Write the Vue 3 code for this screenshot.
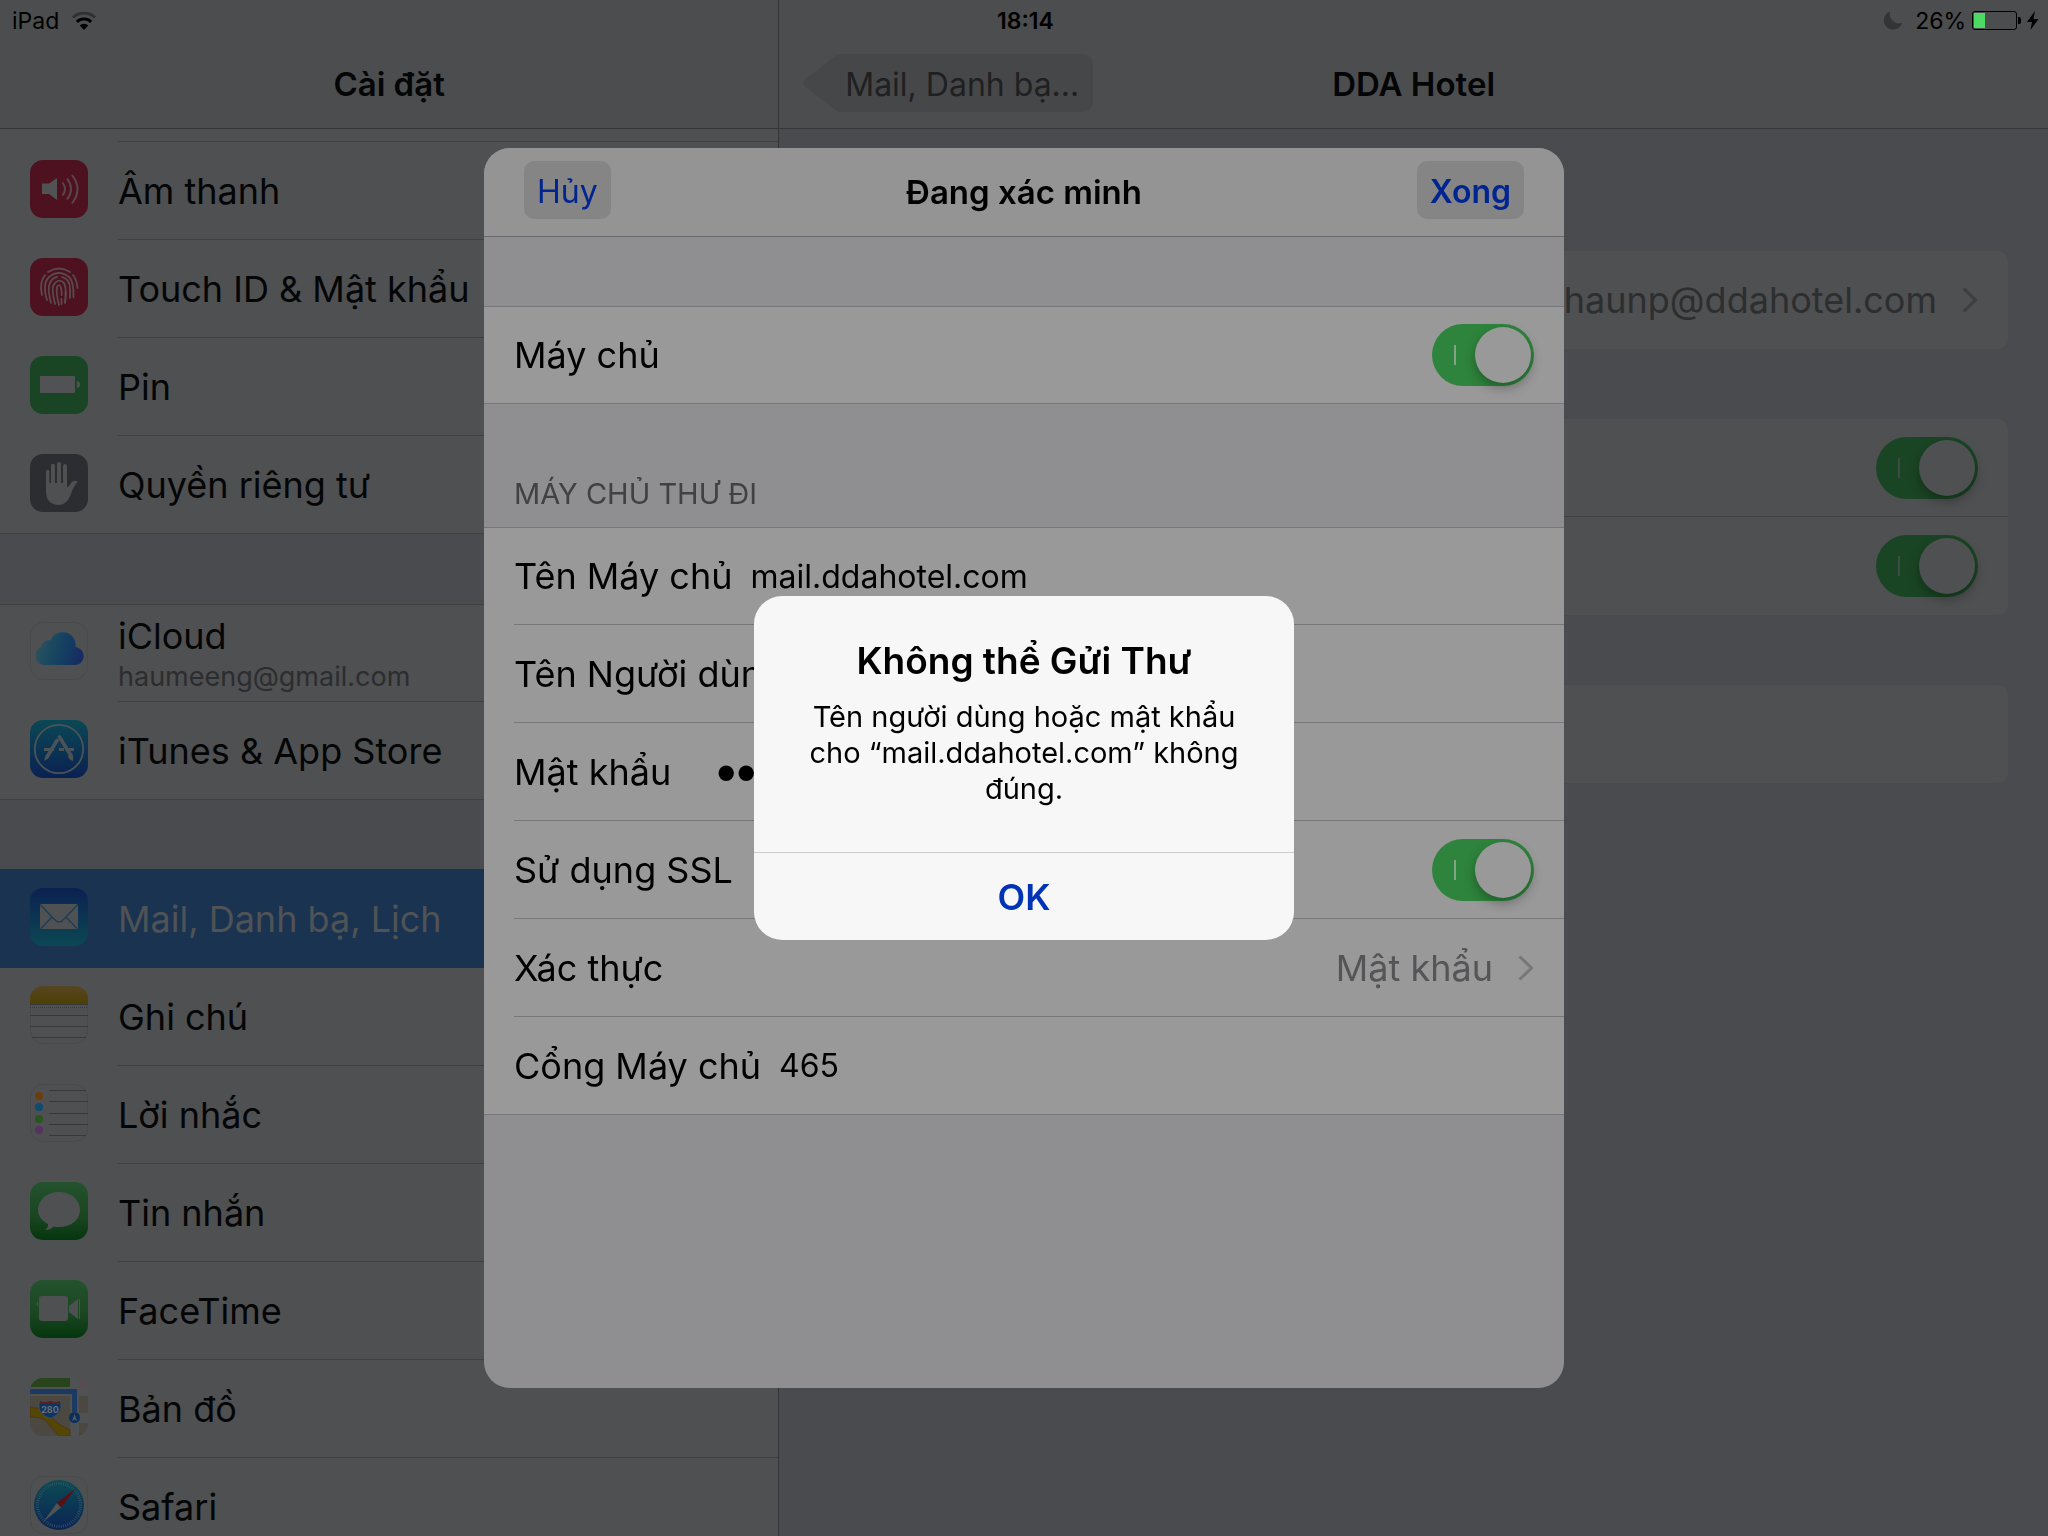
<script setup>
import { ref } from 'vue'

const groups = [
  {
    key: 'device',
    items: [
      { icon: 'sound', label: 'Âm thanh' },
      { icon: 'touch', label: 'Touch ID & Mật khẩu' },
      { icon: 'battery', label: 'Pin' },
      { icon: 'privacy', label: 'Quyền riêng tư' },
    ],
  },
  {
    key: 'accounts',
    items: [
      { icon: 'icloud', label: 'iCloud', detail: 'haumeeng@gmail.com' },
      { icon: 'store', label: 'iTunes & App Store' },
    ],
  },
  {
    key: 'apps',
    items: [
      { icon: 'mail', label: 'Mail, Danh bạ, Lịch', active: true },
      { icon: 'notes', label: 'Ghi chú' },
      { icon: 'reminders', label: 'Lời nhắc' },
      { icon: 'messages', label: 'Tin nhắn' },
      { icon: 'facetime', label: 'FaceTime' },
      { icon: 'maps', label: 'Bản đồ' },
      { icon: 'safari', label: 'Safari' },
    ],
  },
]

const reminderDots = [
  { y: 12, color: '#6b3d0c' },
  { y: 23, color: '#0f4a70' },
  { y: 35, color: '#27561f' },
  { y: 46, color: '#553262' },
]

const ticks = Array.from({ length: 60 }, (_, i) => i * 6)

const serverOn = ref(true)
const sslOn = ref(true)
const mailOn = ref(true)
const notesOn = ref(true)
const hostName = ref('mail.ddahotel.com')
const userName = ref('')
const password = ref('12')
const port = ref('465')
</script>

<template>
  <div class="screen">
    <header class="status">
      <div class="status-left">
        <span>iPad</span>
        <svg width="24" height="18" viewBox="0 0 24 18" aria-hidden="true">
          <path d="M1 5.500 A16 16 0 0 1 23 5.500" fill="none" stroke="#2f3031" stroke-width="3" />
          <path d="M4.800 9.800 A10.500 10.500 0 0 1 19.200 9.800" fill="none" stroke="#000" stroke-width="3" />
          <path d="M12 18 L7.700 13.400 A6.500 6.500 0 0 1 16.300 13.400 Z" fill="#000" />
        </svg>
      </div>
      <time class="clock">18:14</time>
      <div class="status-right">
        <svg class="moon" width="20" height="19" viewBox="0 0 20 19" aria-hidden="true">
          <path d="M7 0.500 A9.300 9.300 0 1 0 19 12 A9.500 9.500 0 0 1 7 0.500 Z" fill="#333435" />
        </svg>
        <span>26%</span>
        <svg class="cell" width="50" height="20" viewBox="0 0 50 20" aria-hidden="true">
          <rect x="0.500" y="0.500" width="44" height="18" rx="2.500" fill="none" stroke="#000" />
          <rect x="2" y="2" width="11" height="15" fill="#4cd964" />
          <path d="M46 6 h1 a2 2 0 0 1 2 2 v3 a2 2 0 0 1 -2 2 h-1 Z" fill="#000" />
        </svg>
        <svg width="12" height="20" viewBox="0 0 12 20" aria-hidden="true">
          <path d="M8 0 L0 11 H5 L3.500 19 L11.500 8 H6.500 Z" fill="#000" />
        </svg>
      </div>
    </header>

    <div class="split">
      <aside class="sidebar">
        <div class="navbar"><h1>Cài đặt</h1></div>
        <nav class="menu">
          <div class="peek"></div>
          <ul v-for="group in groups" :key="group.key" class="group">
            <li v-for="item in group.items" :key="item.icon" class="item" :class="{ active: item.active }">
              <a href="#" class="link">
                <svg class="icon" width="58" height="58" viewBox="0 0 58 58" aria-hidden="true">
                  <template v-if="item.icon === 'sound'">
                    <rect width="58" height="58" rx="13" fill="#4e111f" />
                    <path d="M12 23.500 H19 L27 18 V40 L19 34 H12 Z" fill="#515253" />
                    <path d="M32.500 22.500 q5 6.500 0 13 M37 18.500 q8 10.500 0 21 M42 15 q11 14 0 28.500" fill="none" stroke="#5b4549" stroke-width="2" />
                  </template>
                  <template v-else-if="item.icon === 'touch'">
                    <rect width="58" height="58" rx="13" fill="#4e111f" />
                    <g fill="none" stroke="#5a4a4e" stroke-width="1.800" stroke-linecap="round">
                      <path d="M18 14 Q29 7 40 14" />
                      <path d="M15 17 Q9 25 12 37" />
                      <path d="M43 17 Q47 22 47.500 30" />
                      <path d="M17 42 Q12 26 19 19 Q29 11 39 19 Q44 24 43.500 39" />
                      <path d="M21 45 Q17 30 20 25 Q22 20 27 19 M32 19 Q40 21 40 31 V40" />
                      <path d="M25 46 Q22 34 23 28 Q28 19 34 25 Q37 31 35 44" />
                      <path d="M29 47 Q26 36 27 29 Q30 25 31 30 Q32 34 31.500 37 M31.500 41 V46" />
                      <path d="M35 45 Q36 38 35.500 34" />
                    </g>
                  </template>
                  <template v-else-if="item.icon === 'battery'">
                    <rect width="58" height="58" rx="13" fill="#1a4524" />
                    <rect x="10" y="20" width="35" height="17" rx="1" fill="#505253" />
                    <path d="M47 25 q3 0.500 3 3.500 t-3 3.500 Z" fill="#505253" />
                  </template>
                  <template v-else-if="item.icon === 'privacy'">
                    <rect width="58" height="58" rx="13" fill="#2c2d30" />
                    <g fill="none" stroke="#4f5051" stroke-linecap="round">
                      <path d="M17.700 17.500 V34" stroke-width="3.400" />
                      <path d="M23 11.700 V34 M29 10 V34 M35 12 V34" stroke-width="4" />
                    </g>
                    <path d="M16 29 H37 V33 Q39 33 41 29 Q44 25.500 47.500 27.500 Q44 32 42 37 Q38 51 28 51 Q16 50 16 37 Z" fill="#4f5051" />
                  </template>
                  <template v-else-if="item.icon === 'icloud'">
                    <defs>
                      <linearGradient id="cloud" x1="0" x2="1" y1="0.200" y2="0.400">
                        <stop offset="0" stop-color="#33535c" />
                        <stop offset="0.350" stop-color="#1a4a60" />
                        <stop offset="0.700" stop-color="#143c62" />
                        <stop offset="1" stop-color="#182c62" />
                      </linearGradient>
                    </defs>
                    <rect x="0.500" y="0.500" width="57" height="57" rx="13" fill="#4f5051" stroke="#484a4b" />
                    <path d="M14 43 A9.500 9.500 0 0 1 11 25 A8 8 0 0 1 20.500 18.500 A13 13 0 0 1 45.500 25 A9 9 0 0 1 44 43 Z" fill="url(#cloud)" />
                  </template>
                  <template v-else-if="item.icon === 'store'">
                    <defs>
                      <linearGradient id="store" x1="0" x2="0" y1="0" y2="1">
                        <stop offset="0" stop-color="#0a4855" />
                        <stop offset="1" stop-color="#0a2152" />
                      </linearGradient>
                    </defs>
                    <rect width="58" height="58" rx="13" fill="url(#store)" />
                    <circle cx="29" cy="29" r="24.200" fill="none" stroke="#4b5357" stroke-width="1.800" />
                    <g stroke="#4b5357" fill="none">
                      <path d="M14 29.500 H24 M29 29.500 H34 M39 29.500 H44" stroke-width="3" />
                      <path d="M29.500 17 L40.500 35" stroke-width="3.600" stroke-linecap="round" />
                      <path d="M27 20.500 L17 37" stroke-width="3.600" stroke-linecap="round" />
                    </g>
                    <path d="M38 36 L42 33 Q44 37 43 41 Q39 40 38 36 Z M15 36 L18.500 38 L14.500 41 Z" fill="#4b5357" />
                  </template>
                  <template v-else-if="item.icon === 'mail'">
                    <defs>
                      <linearGradient id="mail" x1="0" x2="0" y1="0" y2="1">
                        <stop offset="0" stop-color="#0b2150" />
                        <stop offset="1" stop-color="#0b4854" />
                      </linearGradient>
                    </defs>
                    <rect width="58" height="58" rx="13" fill="url(#mail)" />
                    <rect x="10" y="16" width="38" height="25" rx="1.500" fill="#4f5153" />
                    <path d="M10.500 17 L24 31 Q29 37 34 31 L47.500 17 M11 40.500 L22 29 M47 40.500 L36 29" fill="none" stroke="#1a3d58" stroke-width="1.300" />
                  </template>
                  <template v-else-if="item.icon === 'notes'">
                    <defs>
                      <clipPath id="notes-clip"><rect width="58" height="58" rx="13" /></clipPath>
                      <linearGradient id="notes" x1="0" x2="0" y1="0" y2="1">
                        <stop offset="0" stop-color="#564523" />
                        <stop offset="1" stop-color="#4e3f04" />
                      </linearGradient>
                    </defs>
                    <rect x="0.500" y="0.500" width="57" height="57" rx="13" fill="#4f5051" stroke="#484a4b" />
                    <g clip-path="url(#notes-clip)">
                      <rect width="58" height="18" fill="url(#notes)" />
                      <path d="M0 18.500 H58" stroke="#38393a" />
                      <path d="M0 21.500 H58" stroke="#3a3b3c" stroke-dasharray="1 1" />
                      <path d="M0 29.500 H58 M0 40.500 H58 M0 51.500 H58" stroke="#37383a" />
                    </g>
                  </template>
                  <template v-else-if="item.icon === 'reminders'">
                    <rect x="0.500" y="0.500" width="57" height="57" rx="13" fill="#4f5051" stroke="#484a4b" />
                    <circle v-for="dot in reminderDots" :key="dot.y" cx="9" :cy="dot.y" r="4" :fill="dot.color" />
                    <path d="M19 6.500 H56 M19 17.500 H58 M19 29.500 H58 M19 40.500 H58 M19 51.500 H56" stroke="#37383a" />
                  </template>
                  <template v-else-if="item.icon === 'messages'">
                    <defs>
                      <linearGradient id="green" x1="0" x2="0" y1="0" y2="1">
                        <stop offset="0" stop-color="#24532e" />
                        <stop offset="0.600" stop-color="#1a4521" />
                        <stop offset="1" stop-color="#04360d" />
                      </linearGradient>
                    </defs>
                    <rect width="58" height="58" rx="13" fill="url(#green)" />
                    <path d="M29 10 C41 10 50 18 50 28 C50 38 41 45 29 45 Q26 45 24 44.500 Q20 48 15 48 Q18.500 45 18 42 C12 39 8 34 8 28 C8 18 17 10 29 10 Z" fill="#4f5051" />
                  </template>
                  <template v-else-if="item.icon === 'facetime'">
                    <rect width="58" height="58" rx="13" fill="url(#green)" />
                    <rect x="9" y="16" width="29" height="25" rx="3" fill="#4f5051" />
                    <path d="M39 26 L48 19 V39 L39 32 Z M49 19 h1 v20 h-1 Z M6 24 l2 -2 v5 Z" fill="#4f5051" />
                  </template>
                  <template v-else-if="item.icon === 'maps'">
                    <defs>
                      <clipPath id="maps-clip"><rect width="58" height="58" rx="13" /></clipPath>
                    </defs>
                    <g clip-path="url(#maps-clip)">
                      <rect width="58" height="58" fill="#505152" />
                      <rect width="40" height="9" fill="#28441a" />
                      <path d="M49 0 V9 H58 Z" fill="#5b4a50" />
                      <rect y="18" width="40" height="40" fill="#4a4841" />
                      <rect x="49" y="18" width="9" height="17" fill="#4a4841" />
                      <rect x="49" y="45" width="9" height="13" fill="#4a4841" />
                      <path d="M0 29 Q16 30 24 42 Q32 49 40 52 V58 H29 Q20 48 15 42 Q10 39 0 39 Z" fill="#544703" stroke="#54351b" />
                      <path d="M49 55 H55 L51 58 H49 Z" fill="#544703" />
                      <path d="M0 13.500 H44.500 V34" fill="none" stroke="#1a3a63" stroke-width="5" />
                      <path d="M9 24 H31 V30 Q30 37 20 40.500 Q10 37 9 30 Z" fill="#0b3563" stroke="#4f5152" stroke-width="0.800" />
                      <path d="M10 23 Q15 25 20 23 Q25 25 30 23 V26 H10 Z" fill="#5b1d22" />
                      <text x="20" y="35" text-anchor="middle" font-size="9" font-weight="700" fill="#6a6d70">280</text>
                      <circle cx="44.500" cy="39.500" r="5.500" fill="#0b2f5b" />
                      <path d="M44.500 36 L47 43 L44.500 41.500 L42 43 Z" fill="#55585a" />
                    </g>
                  </template>
                  <template v-else-if="item.icon === 'safari'">
                    <defs>
                      <linearGradient id="safari" x1="0" x2="0" y1="0" y2="1">
                        <stop offset="0" stop-color="#0b4b55" />
                        <stop offset="1" stop-color="#0b2454" />
                      </linearGradient>
                    </defs>
                    <rect x="0.500" y="0.500" width="57" height="57" rx="13" fill="#4f5051" stroke="#484a4b" />
                    <circle cx="29" cy="29" r="25" fill="url(#safari)" />
                    <path v-for="angle in ticks" :key="angle" d="M29 6 V9" stroke="#3f5763" stroke-width="0.700" :transform="`rotate(${angle} 29 29)`" />
                    <path d="M46 12 L27 27 L31 31.500 Z" fill="#5b0f14" />
                    <path d="M13 46 L27 27 L31 31.500 Z" fill="#505354" />
                  </template>
                </svg>
                <span class="texts">
                  <span class="label">{{ item.label }}</span>
                  <span v-if="item.detail" class="detail">{{ item.detail }}</span>
                </span>
              </a>
            </li>
          </ul>
        </nav>
      </aside>

      <main class="pane">
        <div class="navbar pane-bar">
          <button type="button" class="back">
            <svg class="arrow" width="38" height="58" viewBox="0 0 38 58" aria-hidden="true">
              <path d="M38 0 Q34 0 31 3 L2 25.500 Q-1 29 2 32.500 L31 55 Q34 58 38 58 Z" />
            </svg>
            <span class="back-text">Mail, Danh bạ...</span>
          </button>
          <h2>DDA Hotel</h2>
        </div>
        <div class="cards">
          <section class="card">
            <a href="#" class="card-row">
              <span class="account">haunp@ddahotel.com</span>
              <svg class="chevron" width="16" height="26" viewBox="0 0 16 26" aria-hidden="true">
                <path d="M1.500 1.500 L13.500 13 L1.500 24.500" />
              </svg>
            </a>
          </section>
          <section class="card">
            <div class="card-row"><input v-model="mailOn" type="checkbox" role="switch" class="toggle dim" aria-label="Mail" /></div>
            <div class="card-row"><input v-model="notesOn" type="checkbox" role="switch" class="toggle dim" aria-label="Ghi chú" /></div>
          </section>
          <section class="card"><div class="card-row"></div></section>
        </div>
      </main>
    </div>

    <div class="overlay">
      <form class="sheet" @submit.prevent>
        <header class="sheet-bar">
          <button type="button" class="pill">Hủy</button>
          <h2>Đang xác minh</h2>
          <button type="submit" class="pill strong">Xong</button>
        </header>
        <div class="fields spaced">
          <div class="field">
            <label for="server">Máy chủ</label>
            <input id="server" v-model="serverOn" type="checkbox" role="switch" class="toggle" />
          </div>
        </div>
        <h3 class="caption">MÁY CHỦ THƯ ĐI</h3>
        <div class="fields">
          <div class="field">
            <label for="host">Tên Máy chủ</label>
            <input id="host" v-model="hostName" type="text" class="value" />
          </div>
          <div class="field">
            <label for="user">Tên Người dùng</label>
            <input id="user" v-model="userName" type="text" class="value" />
          </div>
          <div class="field">
            <label for="password">Mật khẩu</label>
            <input id="password" v-model="password" type="password" class="value secret" />
          </div>
          <div class="field">
            <label for="ssl">Sử dụng SSL</label>
            <input id="ssl" v-model="sslOn" type="checkbox" role="switch" class="toggle" />
          </div>
          <a href="#" class="field">
            <span>Xác thực</span>
            <span class="choice">Mật khẩu</span>
            <svg class="chevron light" width="16" height="26" viewBox="0 0 16 26" aria-hidden="true">
              <path d="M1.500 1.500 L13.500 13 L1.500 24.500" />
            </svg>
          </a>
          <div class="field">
            <label for="port">Cổng Máy chủ</label>
            <input id="port" v-model="port" type="text" class="value" />
          </div>
        </div>
      </form>
    </div>

    <div class="overlay">
      <div class="alert" role="alertdialog" aria-labelledby="alert-title" aria-describedby="alert-text">
        <div class="alert-body">
          <h2 id="alert-title">Không thể Gửi Thư</h2>
          <p id="alert-text">Tên người dùng hoặc mật khẩu cho “mail.ddahotel.com” không đúng.</p>
        </div>
        <button type="button" class="ok">OK</button>
      </div>
    </div>
  </div>
</template>

<style>
body {
  background: #4a4b4e;
}
</style>

<style scoped>
* {
  box-sizing: border-box;
}

.screen {
  position: relative;
  display: flex;
  flex-direction: column;
  height: 100vh;
  overflow: hidden;
  background: #4a4b4e;
  color: #040506;
  font-family: Inter, "Liberation Sans", sans-serif;
  font-size: 36px;
}

h1,
h2,
h3,
p,
ul {
  margin: 0;
  padding: 0;
}

h1,
h2 {
  font-size: 33px;
  font-weight: 600;
}

a {
  color: inherit;
  text-decoration: none;
}

button,
input {
  margin: 0;
  padding: 0;
  border: 0;
  background: none;
  color: inherit;
  font: inherit;
}

/* Status bar */
.status {
  position: absolute;
  inset: 0 0 auto 0;
  z-index: 1;
  display: grid;
  grid-template-columns: 1fr auto 1fr;
  align-items: center;
  height: 41px;
  padding: 0 9px 0 12px;
  color: #000;
  font-size: 23px;
}

.status-left,
.status-right {
  display: flex;
  align-items: center;
}

.status-left {
  gap: 13px;
}

.status-right {
  justify-content: flex-end;
}

.clock {
  font-weight: 600;
}

.moon {
  margin-right: 12px;
}

.cell {
  margin: 0 5px 0 6px;
}

/* Split view */
.split {
  display: grid;
  grid-template-columns: 38% 1fr;
  flex: 1;
  min-height: 0;
}

.sidebar,
.pane {
  display: flex;
  flex-direction: column;
  min-height: 0;
  overflow: hidden;
}

.pane {
  border-left: 1px solid #343537;
}

.navbar {
  display: flex;
  flex: none;
  align-items: center;
  justify-content: center;
  height: 129px;
  padding-top: 40px;
  border-bottom: 1px solid #35363a;
  background: #4c4d4e;
}

.menu {
  flex: 1;
}

.peek {
  height: 13px;
  background: linear-gradient(#3f4042, #3f4042) 118px 100% / 100% 1px no-repeat #4f5051;
}

.group {
  list-style: none;
  background: #4f5051;
  box-shadow: inset 0 1px #3f4042;
}

.group:first-of-type {
  box-shadow: none;
}

.group + .group {
  margin-top: 70px;
}

.item {
  height: 98px;
  background: linear-gradient(#3f4042, #3f4042) 118px 100% / 100% 1px no-repeat;
}

.item:last-child {
  background-position: 0 100%;
}

.item.active {
  background: #1a3350;
  box-shadow: 0 -1px #1a3350;
  color: #505355;
}

.link {
  display: flex;
  align-items: center;
  gap: 30px;
  height: 100%;
  padding: 0 30px 4px;
}

.icon {
  flex: none;
}

.texts {
  display: flex;
  flex-direction: column;
  padding-top: 4px;
}

.label {
  line-height: 44px;
}

.detail {
  margin-bottom: -4px;
  color: #2c2d2f;
  font-size: 27px;
  line-height: 38px;
}

/* Detail pane */
.pane-bar {
  position: relative;
}

.back {
  position: absolute;
  top: 54px;
  left: 24px;
  display: flex;
  height: 58px;
  color: #1f2022;
  font-size: 32px;
}

.arrow {
  fill: #464748;
}

.back-text {
  display: flex;
  align-items: center;
  padding: 2px 14px 0 4px;
  border-radius: 0 10px 10px 0;
  background: #464748;
}

.cards {
  display: flex;
  flex-direction: column;
  gap: 70px;
  padding: 122px 40px 0;
}

.card {
  border-radius: 10px;
  background: #4f5051;
}

.card-row {
  display: flex;
  align-items: center;
  justify-content: flex-end;
  gap: 25px;
  height: 98px;
  padding: 0 30px;
}

.card-row + .card-row {
  box-shadow: 0 -1px #3f4042;
}

.account {
  color: #2d2e30;
}

.chevron {
  flex: none;
  fill: none;
  stroke: #3d3e40;
  stroke-width: 3px;
}

.chevron.light {
  stroke: #77777a;
}

/* Switches */
.toggle {
  position: relative;
  flex: none;
  width: 102px;
  height: 62px;
  border-radius: 31px;
  background: #6b6b6d;
  appearance: none;
}

.toggle:checked {
  background: #2e843c;
}

.toggle::before {
  content: "";
  position: absolute;
  top: 21px;
  left: 22px;
  width: 2px;
  height: 20px;
  background: #82a387;
}

.toggle::after {
  content: "";
  position: absolute;
  top: 3px;
  left: 3px;
  width: 56px;
  height: 56px;
  border-radius: 50%;
  background: #999;
  box-shadow: 0 5px 12px rgba(0, 0, 0, 0.3);
}

.toggle:checked::after {
  left: 43px;
}

.toggle.dim {
  background: #1a4524;
}

.toggle.dim::before {
  background: #3f4a42;
}

.toggle.dim::after {
  background: #4f5051;
}

/* Form sheet */
.overlay {
  position: fixed;
  inset: 0;
  z-index: 2;
  display: flex;
  align-items: center;
  justify-content: center;
}

.sheet {
  width: 1080px;
  max-width: 100%;
  height: calc(100vh - 296px);
  overflow: hidden;
  border-radius: 26px;
  background: #8f8f92;
  color: #000;
}

.sheet-bar {
  display: grid;
  grid-template-columns: 1fr auto 1fr;
  align-items: center;
  height: 89px;
  padding: 0 40px 4px;
  border-bottom: 1px solid #69696b;
  background: #949494;
}

.sheet-bar h2 {
  padding-top: 3px;
}

.pill {
  justify-self: start;
  height: 58px;
  padding: 2px 13px 0;
  border-radius: 10px;
  background: #858585;
  color: #002490;
  font-size: 32px;
}

.strong {
  justify-self: end;
  font-weight: 600;
}

.fields {
  border-top: 1px solid #77777a;
  background: #999;
}

.spaced {
  margin-top: 69px;
}

.field {
  display: flex;
  align-items: center;
  height: 98px;
  padding: 0 30px 1px;
  background: linear-gradient(#77777a, #77777a) 30px 100% / 100% 1px no-repeat;
}

.field:first-child {
  height: 97px;
}

.field:last-child {
  background-position: 0 100%;
}

.field label {
  white-space: nowrap;
}

.value {
  flex: 1;
  min-width: 0;
  margin-left: 18px;
  font-size: 32px;
}

.secret {
  margin-left: 45px;
  font-family: "Liberation Sans", sans-serif;
  font-size: 57px;
}

.field .toggle,
.choice {
  margin-left: auto;
}

.choice {
  margin-right: 25px;
  color: #555557;
}

.caption {
  padding: 72px 30px 15px;
  color: #414143;
  font-size: 29px;
  font-weight: 400;
  line-height: 36px;
}

/* Alert */
.alert {
  width: 540px;
  overflow: hidden;
  border-radius: 28px;
  background: #f7f7f7;
  color: #000;
  text-align: center;
}

.alert-body {
  padding: 43px 40px 45px;
}

.alert h2 {
  font-size: 37px;
  line-height: 44px;
}

.alert p {
  margin-top: 16px;
  font-size: 29px;
  line-height: 36px;
}

.ok {
  width: 100%;
  height: 88px;
  border-top: 1px solid #cdcdd1;
  color: #0033b5;
  font-size: 36px;
  font-weight: 600;
}
</style>
